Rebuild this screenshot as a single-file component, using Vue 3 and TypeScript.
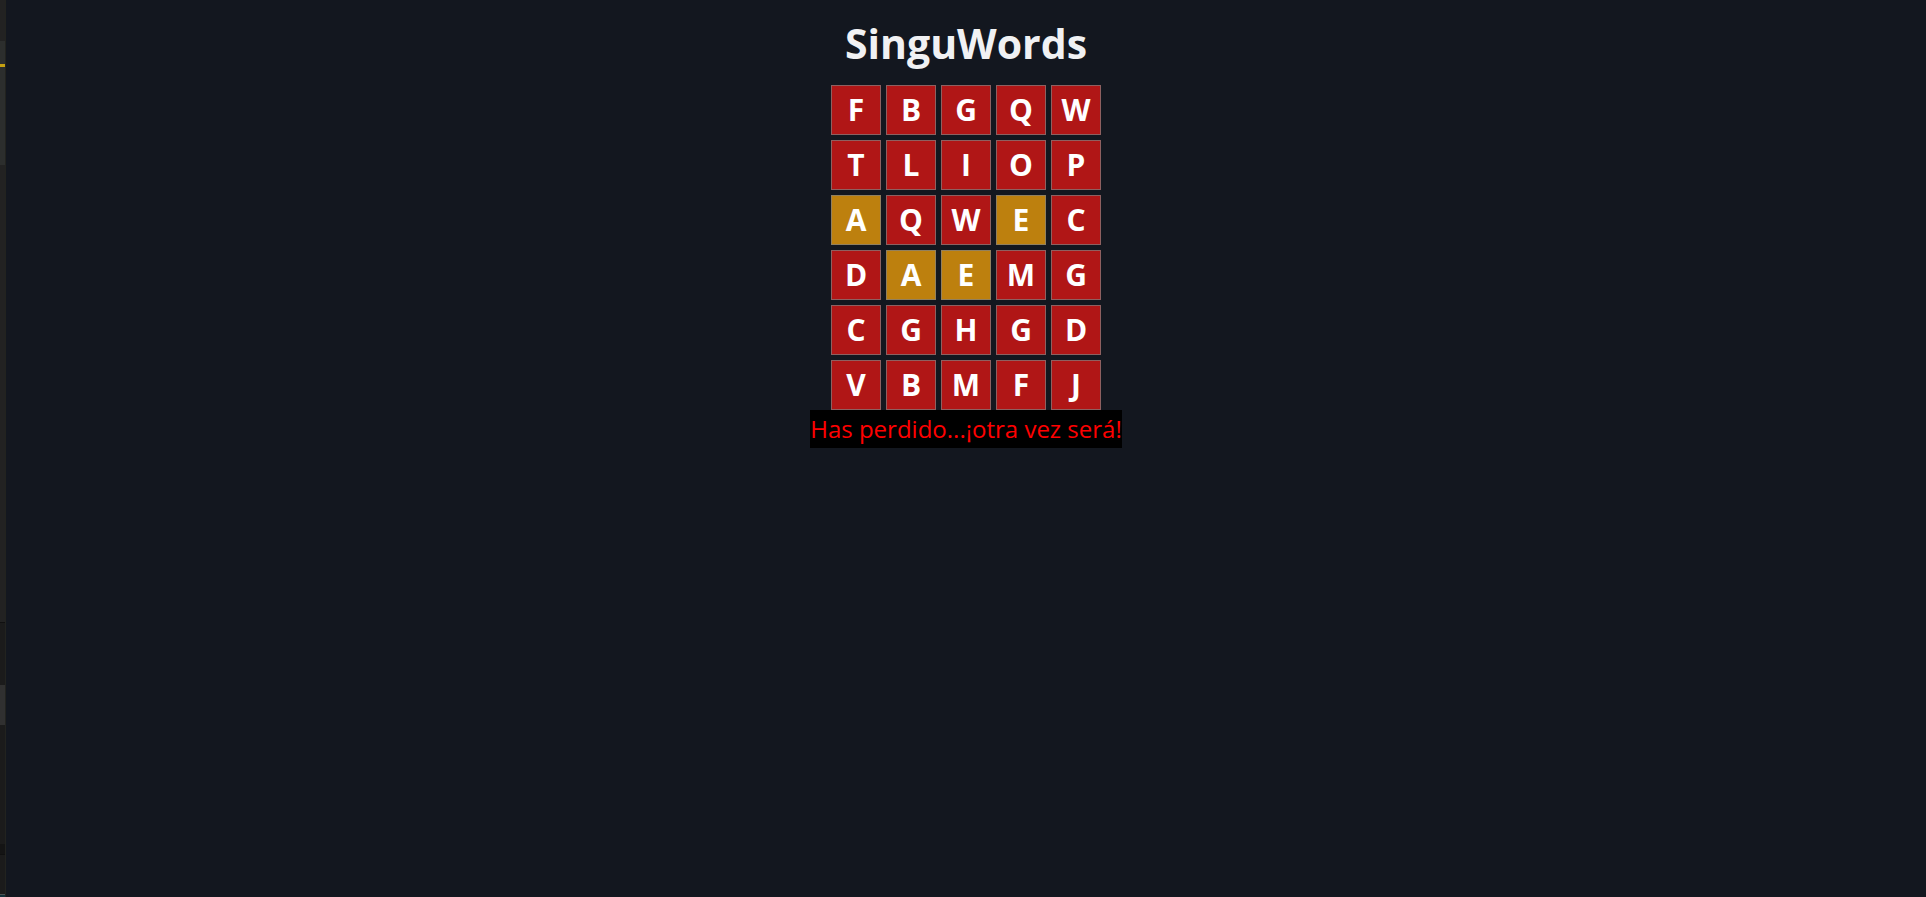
<script setup lang="ts">
type CellState = 'absent' | 'present'

interface Cell {
  letter: string
  state: CellState
}

const guesses: string[] = ['FBGQW', 'TLIOP', 'AQWEC', 'DAEMG', 'CGHGD', 'VBMFJ']
const presentLetters = new Set<string>(['A', 'E'])

const rows: Cell[][] = guesses.map((word) =>
  [...word].map((letter) => ({
    letter,
    state: presentLetters.has(letter) ? 'present' : 'absent',
  })),
)
</script>

<template>
  <div class="screen">
    <div class="edge" aria-hidden="true">
      <span class="top"></span>
      <span class="tab"></span>
      <span class="mark"></span>
      <span class="panel"></span>
      <span class="body"></span>
      <span class="rule"></span>
      <span class="list"></span>
      <span class="selected"></span>
      <span class="rest"></span>
      <span class="bar"></span>
      <span class="rule"></span>
      <span class="foot"></span>
      <span class="line"></span>
      <span class="status"></span>
    </div>
    <main class="game">
      <h1>SinguWords</h1>
      <div class="board">
        <div v-for="(row, r) in rows" :key="r" class="row">
          <div v-for="(cell, c) in row" :key="c" class="cell" :class="cell.state">{{ cell.letter }}</div>
        </div>
      </div>
      <p class="message" role="status">Has perdido...¡otra vez será!</p>
    </main>
  </div>
</template>

<style>
body {
  margin: 0;
  background: #13171f;
}
</style>

<style scoped>
.screen {
  display: flex;
  min-height: 100vh;
  font-family: "Segoe UI", "Open Sans", "Noto Sans", sans-serif;
  background: #13171f;
}

.edge {
  display: flex;
  flex-direction: column;
  width: 5px;
  border-right: 1px solid #22231f;
  background: #1b1b1b;
}

.top { height: 41px; background: #222222; }
.tab { height: 23px; background: #2c2e2d; }
.mark { height: 3px; background: #c4a012; }
.panel { height: 98px; background: #2c2e2d; }
.body { flex: 1; background: #222222; }
.rule { height: 1px; background: #101010; }
.list { height: 62px; }
.selected { height: 40px; background: #303030; }
.rest { height: 119px; }
.bar { height: 10px; background: #141414; }
.foot { height: 39px; }
.line { height: 1px; background: #4a5252; }
.status { height: 2px; background: #12303a; }

.game {
  flex: 1;
  display: flex;
  flex-direction: column;
  align-items: center;
}

h1 {
  margin: 15px 0 14px;
  font-size: 41px;
  line-height: 56px;
  font-weight: 700;
  color: #f0f1f3;
}

.board {
  display: flex;
  flex-direction: column;
  gap: 5px;
}

.row {
  display: flex;
  gap: 5px;
}

.cell {
  box-sizing: border-box;
  display: flex;
  align-items: center;
  justify-content: center;
  width: 50px;
  height: 50px;
  border: 1px solid rgba(128, 128, 128, 0.7);
  font-size: 30px;
  line-height: 48px;
  font-weight: 700;
  color: #ffffff;
}

.absent { background: #b01616; }
.present { background: #bd800e; }

.message {
  margin: 0;
  font-size: 24px;
  line-height: 38px;
  color: #ff0000;
  background: #000000;
}
</style>
